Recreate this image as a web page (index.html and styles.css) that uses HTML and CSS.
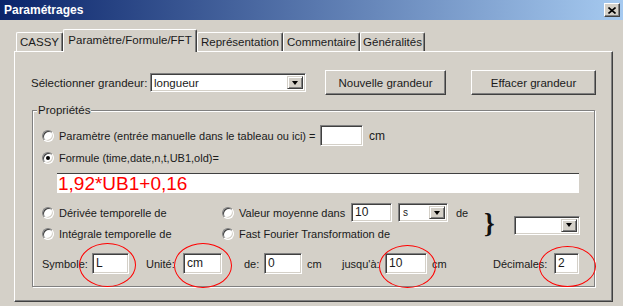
FILE: index.html
```html
<!DOCTYPE html>
<html lang="fr">
<head>
  <meta charset="UTF-8">
  <title>Paramétrages</title>
  <link rel="stylesheet" href="styles.css">
</head>
<body>
  <div class="window">
    <div class="titlebar">
      <span class="title">Paramétrages</span>
      <span class="close">
        <svg width="8" height="7" viewBox="0 0 8 7"><path d="M0.5 0.5 L7.5 6.5 M7.5 0.5 L0.5 6.5" stroke="#000" stroke-width="1.6"/></svg>
      </span>
    </div>

    <div class="tabs">
      <div class="tab tab-cassy">CASSY</div>
      <div class="tab tab-active">Paramètre/Formule/FFT</div>
      <div class="tab tab-repr">Représentation</div>
      <div class="tab tab-comm">Commentaire</div>
      <div class="tab tab-gen">Généralités</div>
    </div>

    <div class="panel">
      <div class="select-row">
        <span class="select-label">Sélectionner grandeur:</span>
        <div class="combo combo-grandeur">
          <span class="combo-text">longueur</span>
          <span class="combo-btn"></span>
        </div>
        <button class="btn btn-new">Nouvelle grandeur</button>
        <button class="btn btn-clear">Effacer grandeur</button>
      </div>

      <div class="groupbox">
        <div class="group-title">Propriétés</div>

        <div class="opt-row opt-first">
          <span class="radio"></span>
          <span class="param-text">Paramètre (entrée manuelle dans le tableau ou ici) =</span>
          <div class="field field-param"></div>
          <span class="param-unit">cm</span>
        </div>
        <div class="opt-row">
          <span class="radio checked"></span>
          <span>Formule (time,date,n,t,UB1,old)=</span>
        </div>
        <div class="formula">1,92*UB1+0,16</div>

        <div class="calc-block">
          <div class="calc-grid">
            <div class="opt-row"><span class="radio"></span><span>Dérivée temporelle de</span></div>
            <div class="opt-row">
              <span class="radio"></span>
              <span class="mean-text">Valeur moyenne dans</span>
              <div class="field field-mean">10</div>
              <div class="combo combo-unit">
                <span class="combo-text combo-small">s</span>
                <span class="combo-btn"></span>
              </div>
              <span class="mean-de">de</span>
            </div>
            <div class="opt-row"><span class="radio"></span><span>Intégrale temporelle de</span></div>
            <div class="opt-row"><span class="radio"></span><span>Fast Fourier Transformation de</span></div>
          </div>
          <span class="brace">}</span>
          <div class="combo combo-source">
            <span class="combo-text"></span>
            <span class="combo-btn"></span>
          </div>
        </div>

        <div class="field-row">
          <span class="lbl lbl-symbole">Symbole:</span>
          <div class="ringed">
            <div class="field f-symbole">L</div>
            <span class="ring ring-symbole"></span>
          </div>
          <span class="lbl lbl-unite">Unité:</span>
          <div class="ringed">
            <div class="field f-unite">cm</div>
            <span class="ring ring-unite"></span>
          </div>
          <span class="lbl lbl-de">de:</span>
          <div class="field f-de">0</div>
          <span class="lbl lbl-cm1">cm</span>
          <span class="lbl lbl-jusqua">jusqu'à:</span>
          <div class="ringed">
            <div class="field f-jusqua">10</div>
            <span class="ring ring-jusqua"></span>
          </div>
          <span class="lbl lbl-cm2">cm</span>
          <span class="lbl lbl-dec">Décimales:</span>
          <div class="ringed">
            <div class="field f-dec">2</div>
            <span class="ring ring-dec"></span>
          </div>
        </div>
      </div>
    </div>
  </div>
</body>
</html>
```

FILE: styles.css
```css
/* Dialog frame */
body {
  margin: 0;
  background: #d4d0c8;
  font-family: 'Liberation Sans', Arial, sans-serif;
  font-size: 11px;
  color: #1a1a1a;
  white-space: nowrap;
}

.window {
  width: 623px;
  height: 306px;
  overflow: hidden;
  background: #d4d0c8;
}

.titlebar {
  height: 20px;
  display: flex;
  align-items: center;
  justify-content: space-between;
  padding: 0 3px 0 4px;
  background: linear-gradient(to right, #0a246a, #a6caf0);
}

.title {
  color: #fff;
  font-weight: bold;
  font-size: 12px;
}

.close {
  width: 16px;
  height: 14px;
  box-sizing: border-box;
  display: flex;
  align-items: center;
  justify-content: center;
  background: #d4d0c8;
  border: 1px solid;
  border-color: #fff #404040 #404040 #fff;
  box-shadow: inset -1px -1px #808080;
}

/* Tabs */
.tabs {
  display: flex;
  align-items: flex-end;
  margin: 9px 0 0 16px;
  height: 22px;
  position: relative;
  z-index: 1;
}

.tab {
  height: 19px;
  box-sizing: border-box;
  display: flex;
  align-items: center;
  justify-content: center;
  border: 1px solid;
  border-bottom: none;
  border-color: #fff #404040 #fff #fff;
  border-radius: 2px 2px 0 0;
  box-shadow: inset -1px 0 #808080;
  background: #d4d0c8;
  font-size: 11.5px;
}

.tab-cassy { width: 47px; }
.tab-active {
  width: 134px;
  height: 23px;
  margin-bottom: -1px;
  padding-bottom: 3px;
}
.tab-repr { width: 86px; }
.tab-comm { width: 77px; }
.tab-gen { width: 65px; }

.panel {
  margin-left: 14px;
  width: 599px;
  height: 251px;
  box-sizing: border-box;
  border: 1px solid;
  border-color: #fff #404040 #404040 #fff;
  box-shadow: inset -1px -1px #808080;
}

/* Top row */
.select-row {
  display: flex;
  align-items: center;
  height: 25px;
  margin-top: 18px;
  padding-left: 16px;
  font-size: 11.5px;
}

.select-label { width: 119px; }

.combo {
  box-sizing: border-box;
  display: flex;
  align-items: center;
  background: #fff;
  border: 1px solid;
  border-color: #808080 #fff #fff #808080;
  box-shadow: inset 1px 1px #404040, inset -1px -1px #d4d0c8;
  padding: 2px;
}

.combo-grandeur { width: 156px; height: 19px; }

.combo-text {
  flex: 1;
  padding-left: 1px;
}

.combo-small { font-size: 10px; padding-left: 2px; }

.combo-btn {
  width: 16px;
  height: 100%;
  box-sizing: border-box;
  display: flex;
  align-items: center;
  justify-content: center;
  background: #d4d0c8;
  border: 1px solid;
  border-color: #d4d0c8 #404040 #404040 #d4d0c8;
  box-shadow: inset 1px 1px #fff, inset -1px -1px #808080;
}

.combo-btn::after {
  content: '';
  border-left: 3.5px solid transparent;
  border-right: 3.5px solid transparent;
  border-top: 4px solid #000;
}

.btn {
  height: 25px;
  box-sizing: border-box;
  background: #d4d0c8;
  font: inherit;
  color: inherit;
  border: 1px solid;
  border-color: #fff #404040 #404040 #fff;
  box-shadow: inset -1px -1px #808080;
  padding: 0;
}

.btn-new { width: 121px; margin-left: 19px; }
.btn-clear { width: 125px; margin-left: 25px; }

/* Group box */
.groupbox {
  margin: 15px 0 0 17px;
  width: 563px;
  height: 177px;
  box-sizing: border-box;
  border: 1px solid #808080;
  box-shadow: inset 1px 1px #fff, 1px 1px #fff;
}

.group-title {
  width: fit-content;
  margin: -8px 0 0 4px;
  padding: 0 1px;
  line-height: 14px;
  background: #d4d0c8;
  font-size: 11.5px;
}

.opt-row {
  display: flex;
  align-items: center;
  height: 21px;
  padding-left: 9px;
}

.opt-first { margin-top: 8px; }
.opt-row + .opt-row { margin-top: 1px; }

.radio {
  width: 12px;
  height: 12px;
  box-sizing: border-box;
  margin-right: 5px;
  border-radius: 50%;
  background: #fff;
  border: 1px solid;
  border-color: #808080 #fff #fff #808080;
  box-shadow: inset 1px 1px #404040, inset -1px -1px #d4d0c8;
  display: flex;
  align-items: center;
  justify-content: center;
}

.radio.checked::after {
  content: '';
  width: 4px;
  height: 4px;
  border-radius: 50%;
  background: #000;
}

.param-text { width: 257px; }

.field {
  box-sizing: border-box;
  height: 21px;
  line-height: 19px;
  padding-left: 3px;
  background: #fff;
  border: 1px solid;
  border-color: #808080 #fff #fff #808080;
  box-shadow: inset 1px 1px #404040, inset -1px -1px #d4d0c8;
  font-size: 12px;
}

.field-param { width: 43px; margin-left: 4px; }
.param-unit { margin-left: 6px; font-size: 12px; }

.formula {
  margin: 5px 0 0 24px;
  width: 522px;
  height: 20px;
  box-sizing: border-box;
  background: #fff;
  border-top: 1px solid #404040;
  color: #f00;
  font-size: 19px;
  line-height: 19px;
  padding-left: 1px;
}

/* Derivative / mean / FFT block */
.calc-block {
  display: flex;
  align-items: center;
  margin-top: 9px;
  padding-left: 9px;
}

.calc-grid {
  display: grid;
  grid-template-columns: 180px 260px;
  grid-auto-rows: 21px;
}

.calc-grid .opt-row { padding-left: 0; }
.calc-grid .opt-row + .opt-row { margin-top: 0; }

.mean-text { width: 112px; }
.field-mean { width: 41px; height: 19px; line-height: 17px; }

.combo-unit {
  width: 50px;
  height: 19px;
  margin-left: 6px;
}

.mean-de { margin-left: 8px; }

.brace {
  font-family: 'Liberation Serif', serif;
  font-weight: bold;
  font-size: 27px;
  line-height: 27px;
  margin-left: 2px;
  color: #111;
}

.combo-source {
  width: 66px;
  height: 19px;
  margin-left: 19px;
  margin-top: 4px;
}

/* Bottom row with circled fields */
.field-row {
  display: flex;
  align-items: center;
  height: 21px;
  margin-top: 9px;
  padding-left: 9px;
}

.ringed { position: relative; }

.ring {
  position: absolute;
  border: 1px solid #f00;
  border-radius: 50%;
}

.lbl-symbole { width: 50px; }
.f-symbole { width: 37px; }
.ring-symbole { left: -13px; top: -10px; width: 55px; height: 42px; }

.lbl-unite { width: 37px; margin-left: 17px; }
.f-unite { width: 39px; }
.ring-unite { left: -9px; top: -10px; width: 56px; height: 43px; }

.lbl-de { width: 20px; margin-left: 22px; }
.f-de { width: 38px; }
.lbl-cm1 { width: 35px; margin-left: 5px; }

.lbl-jusqua { width: 43px; }
.f-jusqua { width: 42px; }
.ring-jusqua { left: -6px; top: -8px; width: 55px; height: 41px; }

.lbl-cm2 { width: 61px; margin-left: 5px; }
.lbl-dec { width: 61px; }
.f-dec { width: 25px; }
.ring-dec { left: -15px; top: -7px; width: 55px; height: 39px; }
```
